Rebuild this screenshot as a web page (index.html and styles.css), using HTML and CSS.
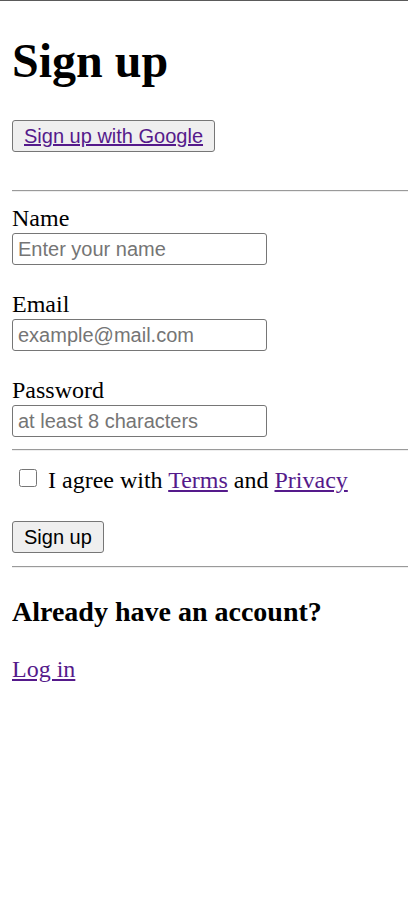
FILE: index.html
```html
<!DOCTYPE html>
<html lang="en">
<head>
<meta charset="utf-8">
<title>Sign up</title>
<link rel="stylesheet" href="styles.css">
</head>
<body>
<h1 class="title">Sign up</h1>
<div class="google-row">
  <button class="btn" type="button"><a class="link" href="#">Sign up with Google</a></button>
</div>
<hr class="rule">
<form class="form">
  <div class="field">
    <label class="label" for="name">Name</label>
    <input class="input" id="name" type="text" placeholder="Enter your name">
  </div>
  <div class="field">
    <label class="label" for="email">Email</label>
    <input class="input" id="email" type="email" placeholder="example@mail.com">
  </div>
  <div class="field">
    <label class="label" for="password">Password</label>
    <input class="input" id="password" type="password" placeholder="at least 8 characters">
  </div>
  <hr class="rule">
  <div class="agree">
    <input class="check" type="checkbox" id="agree">
    <label for="agree">I agree with <a class="link" href="#">Terms</a> and <a class="link" href="#">Privacy</a></label>
  </div>
  <div class="submit-row">
    <button class="btn" type="submit">Sign up</button>
  </div>
</form>
<hr class="rule">
<h3 class="subtitle">Already have an account?</h3>
<p class="login"><a class="link" href="#">Log in</a></p>
</body>
</html>
```
FILE: styles.css
```css
html {
  border-top: 1px solid #5a5a5a;
  background: #fff;
}
body {
  margin: 0 0 12px 12px;
  font-family: "Liberation Serif", "Times New Roman", serif;
  font-size: 24px;
  color: #000;
}
.title {
  font-size: 48px;
  font-weight: bold;
  margin: 32px 0;
}
.google-row {
  display: flex;
  margin-bottom: 38px;
}
.btn {
  font-family: "Liberation Sans", Arial, sans-serif;
  font-size: 20px;
  line-height: 22px;
  padding: 4px 11px;
  background: #efefef;
  border: 1px solid #767676;
  border-radius: 3px;
  color: #000;
}
.link {
  color: #551a8b;
  text-decoration: underline;
}
.rule {
  box-sizing: border-box;
  height: 2px;
  border: 0;
  border-top: 1px solid #9a9a9a;
  border-bottom: 1px solid #eeeeee;
  margin: 12px 0;
}
.form {
  margin: 0;
}
.field {
  display: flex;
  flex-direction: column;
  align-items: flex-start;
  margin-top: 25px;
}
.field:first-child {
  margin-top: 0;
}
.label {
  line-height: 28px;
  margin-bottom: 1px;
}
.input {
  box-sizing: border-box;
  width: 255px;
  height: 32px;
  padding: 2px 5px;
  font-family: "Liberation Sans", Arial, sans-serif;
  font-size: 20px;
  border: 1px solid #767676;
  border-radius: 3px;
  margin: 0;
}
.input::placeholder {
  color: #757575;
}
.field:last-of-type {
  margin-bottom: 12px;
}
.agree {
  display: flex;
  align-items: flex-start;
  margin-top: 15px;
  line-height: 28px;
}
.check {
  width: 18px;
  height: 18px;
  margin: 3px 11px 0 7px;
}
.submit-row {
  display: flex;
  margin-top: 27px;
  margin-bottom: 13px;
}
.subtitle {
  font-size: 28px;
  font-weight: bold;
  margin: 28px 0;
}
.login {
  margin: 28px 0;
}
```
